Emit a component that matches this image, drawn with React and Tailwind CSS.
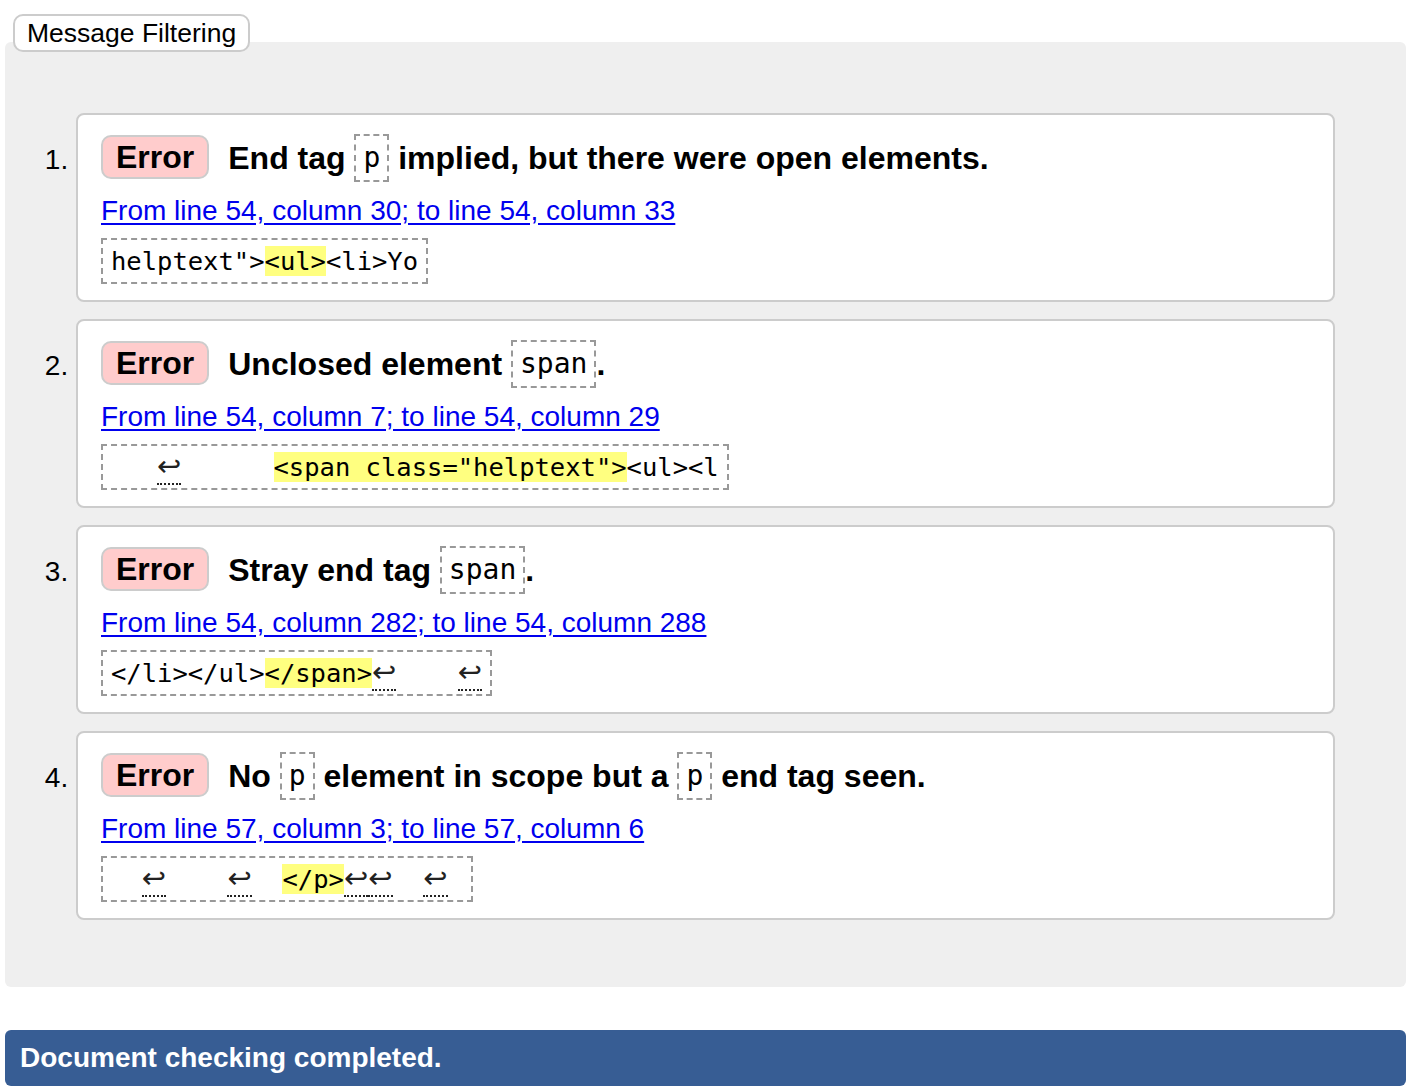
const messages = [
  {
    title: [
      { t: "End tag " },
      { c: "p" },
      { t: " implied, but there were open elements." },
    ],
    loc: "From line 54, column 30; to line 54, column 33",
    extract: [{ s: 'helptext">' }, { m: "<ul>" }, { s: "<li>Yo" }],
  },
  {
    title: [{ t: "Unclosed element " }, { c: "span" }, { t: "." }],
    loc: "From line 54, column 7; to line 54, column 29",
    extract: [
      { s: "   " },
      { lf: true },
      { s: "      " },
      { m: '<span class="helptext">' },
      { s: "<ul><l" },
    ],
  },
  {
    title: [{ t: "Stray end tag " }, { c: "span" }, { t: "." }],
    loc: "From line 54, column 282; to line 54, column 288",
    extract: [
      { s: "</li></ul>" },
      { m: "</span>" },
      { lf: true },
      { s: "    " },
      { lf: true },
    ],
  },
  {
    title: [
      { t: "No " },
      { c: "p" },
      { t: " element in scope but a " },
      { c: "p" },
      { t: " end tag seen." },
    ],
    loc: "From line 57, column 3; to line 57, column 6",
    extract: [
      { s: "  " },
      { lf: true },
      { s: "    " },
      { lf: true },
      { s: "  " },
      { m: "</p>" },
      { lf: true },
      { lf: true },
      { s: "  " },
      { lf: true },
      { s: " " },
    ],
  },
];

const mono = "font-['DejaVu_Sans_Mono',monospace]";

function Title({ parts }) {
  return parts.map((p, i) =>
    p.c ? (
      <code
        key={i}
        className={`${mono} inline-block border-2 border-dashed border-[#999] px-[7px] py-[6px] align-[2px] text-[28px] font-normal leading-[32px]`}
      >
        {p.c}
      </code>
    ) : (
      <span key={i} className="whitespace-pre">
        {p.t}
      </span>
    )
  );
}

function Extract({ parts }) {
  return (
    <code
      className={`${mono} inline-block whitespace-pre border-2 border-dashed border-[#999] px-[8px] py-[6px] text-[25.5px] leading-[30px] text-black`}
    >
      {parts.map((p, i) => {
        if (p.lf)
          return (
            <b
              key={i}
              title="U+000A"
              className="border-b-2 border-dotted border-[#222] font-['DejaVu_Sans',sans-serif] text-[29px] font-normal leading-[20px] text-[#222]"
            >
              ↩
            </b>
          );
        if (p.m)
          return (
            <mark key={i} className="bg-[#ffff80] text-black">
              {p.m}
            </mark>
          );
        return <span key={i}>{p.s}</span>;
      })}
    </code>
  );
}

export default function App() {
  return (
    <div className="min-h-screen bg-white font-['Liberation_Sans',Arial,sans-serif] text-[28px] text-black">
      <div className="pl-[5px] pr-[8px] pt-[14px]">
        <div className="relative z-10 mb-[-10px] ml-[8px] block w-fit rounded-[10px] border-2 border-[#ccc] bg-white px-[12px] text-[26.5px] leading-[34px]">
          Message Filtering
        </div>
        <div className="rounded-[6px] bg-[#efefef] pb-[67px] pl-[71px] pr-[71px] pt-[71px]">
          <ol className="flex list-decimal flex-col gap-[17px]">
            {messages.map((msg, i) => (
              <li
                key={i}
                className="rounded-[8px] border-2 border-[#ccc] bg-white px-[23px] pb-[16px] pt-[17px]"
              >
                <p className="text-[32px] font-bold leading-[52px]">
                  <strong className="mr-[19px] inline-block rounded-[10px] border-2 border-[#ccc] bg-[#ffcccc] px-[13px] align-[1px] leading-[40px]">
                    Error
                  </strong>
                  <Title parts={msg.title} />
                </p>
                <p className="mt-[10px] leading-[34px]">
                  <a href="#" className="text-[#0000ee] underline underline-offset-[3px]">
                    {msg.loc}
                  </a>
                </p>
                <p className="mt-[10px] leading-none">
                  <Extract parts={msg.extract} />
                </p>
              </li>
            ))}
          </ol>
        </div>
        <div className="mt-[43px] rounded-[6px] bg-[#375d94] px-[15px] py-[10px] text-[28px] font-bold leading-[36px] text-white">
          Document checking completed.
        </div>
      </div>
    </div>
  );
}
